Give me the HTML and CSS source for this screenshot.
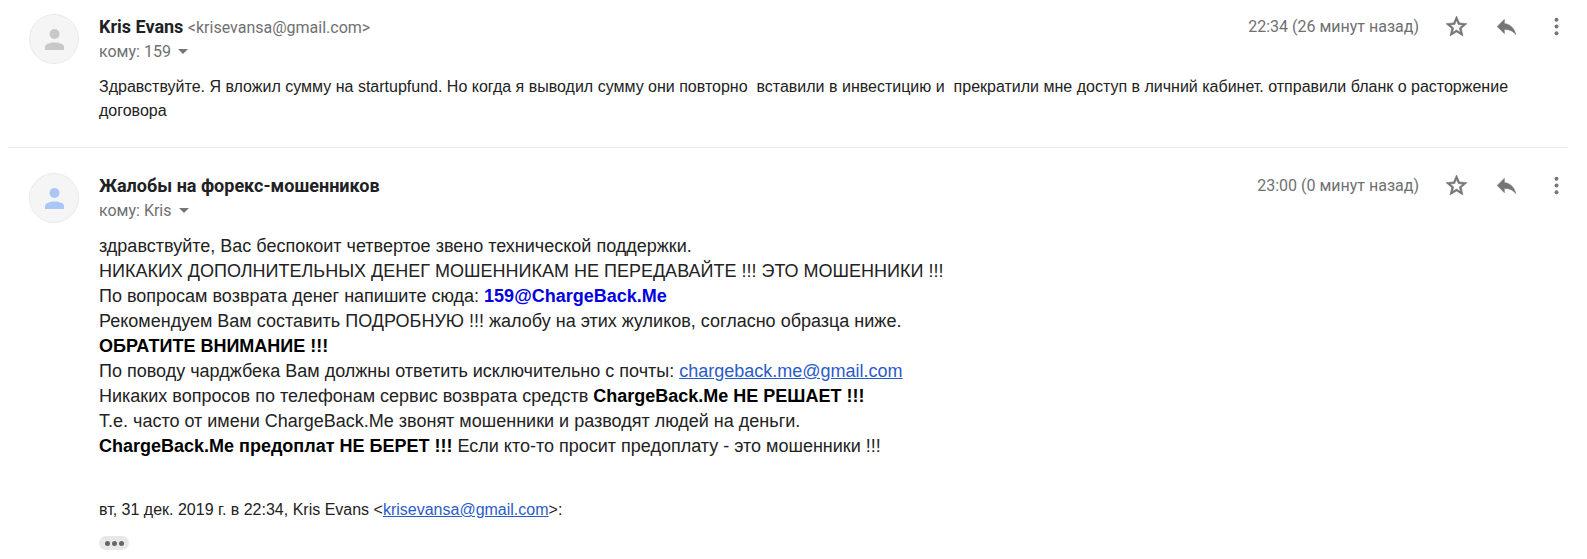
FILE: index.html
```
<!DOCTYPE html>
<html lang="ru">
<head>
    <meta charset="UTF-8">
    <title>Жалобы на форекс-мошенников</title>
    <link rel="stylesheet" href="styles.css">
</head>
<body>
<svg class="icon-defs" aria-hidden="true">
    <symbol id="person" viewBox="0 0 19 21">
        <circle cx="9.5" cy="5" r="5"/>
        <path d="M0 21v-3c0-3 5-4.500 9.500-4.500S19 15 19 18v3z"/>
    </symbol>
    <symbol id="star" viewBox="0 0 24 24">
        <path stroke-width="0.6" d="M22 9.24l-7.19-.62L12 2 9.19 8.63 2 9.24l5.46 4.73L5.82 21 12 17.27 18.18 21l-1.63-7.03L22 9.24zM12 15.4l-3.76 2.27 1-4.28-3.32-2.88 4.38-.38L12 6.1l1.71 4.04 4.38.38-3.32 2.88 1 4.28L12 15.4z"/>
    </symbol>
    <symbol id="reply" viewBox="0 0 24 24">
        <path stroke-width="0.4" d="M10 9V5l-7 7 7 7v-4.100c5 0 8.500 1.600 11 5.100-1-5-4-10-11-11z"/>
    </symbol>
    <symbol id="more" viewBox="0 0 24 24">
        <circle cx="12" cy="5.500" r="1.900"/>
        <circle cx="12" cy="12" r="1.900"/>
        <circle cx="12" cy="18.500" r="1.900"/>
    </symbol>
</svg>
<div class="message">
    <div class="avatar"><svg><use href="#person"/></svg></div>
    <div class="content">
        <div class="header">
            <div class="sender">
                <span class="name">Kris Evans</span>
                <span class="email">&lt;krisevansa@gmail.com&gt;</span>
            </div>
            <div class="time">22:34 (26 минут назад)</div>
            <div class="actions">
                <button aria-label="Пометить"><svg><use href="#star"/></svg></button>
                <button aria-label="Ответить"><svg><use href="#reply"/></svg></button>
                <button aria-label="Ещё"><svg><use href="#more"/></svg></button>
            </div>
        </div>
        <button class="recipient">кому: 159 <span class="arrow"></span></button>
        <div class="body small">Здравствуйте. Я вложил сумму на startupfund. Но когда я выводил сумму они повторно&nbsp; вставили в инвестицию и&nbsp; прекратили мне доступ в личний кабинет. отправили бланк о расторжение договора</div>
    </div>
</div>
<hr>
<div class="message">
    <div class="avatar own"><svg><use href="#person"/></svg></div>
    <div class="content">
        <div class="header">
            <div class="sender">
                <span class="name">Жалобы на форекс-мошенников</span>
            </div>
            <div class="time">23:00 (0 минут назад)</div>
            <div class="actions">
                <button aria-label="Пометить"><svg><use href="#star"/></svg></button>
                <button aria-label="Ответить"><svg><use href="#reply"/></svg></button>
                <button aria-label="Ещё"><svg><use href="#more"/></svg></button>
            </div>
        </div>
        <button class="recipient">кому: Kris <span class="arrow"></span></button>
        <div class="body">
            здравствуйте, Вас беспокоит четвертое звено технической поддержки.<br>
            НИКАКИХ ДОПОЛНИТЕЛЬНЫХ ДЕНЕГ МОШЕННИКАМ НЕ ПЕРЕДАВАЙТЕ !!! ЭТО МОШЕННИКИ !!!<br>
            По вопросам возврата денег напишите сюда: <b class="address">159@ChargeBack.Me</b><br>
            Рекомендуем Вам составить ПОДРОБНУЮ !!! жалобу на этих жуликов, согласно образца ниже.<br>
            <b>ОБРАТИТЕ ВНИМАНИЕ !!!</b><br>
            По поводу чарджбека Вам должны ответить исключительно с почты: <a href="mailto:chargeback.me@gmail.com">chargeback.me@gmail.com</a><br>
            Никаких вопросов по телефонам сервис возврата средств <b>ChargeBack.Me НЕ РЕШАЕТ !!!</b><br>
            Т.е. часто от имени ChargeBack.Me звонят мошенники и разводят людей на деньги.<br>
            <b>ChargeBack.Me предоплат НЕ БЕРЕТ !!!</b> Если кто-то просит предоплату - это мошенники !!!
        </div>
        <div class="quote small">вт, 31 дек. 2019 г. в 22:34, Kris Evans &lt;<a href="mailto:krisevansa@gmail.com">krisevansa@gmail.com</a>&gt;:</div>
        <button class="trimmed" aria-label="Показать скрытый текст"><i></i><i></i><i></i></button>
    </div>
</div>
</body>
</html>
```

FILE: styles.css
```
* {
    box-sizing: border-box;
}

body {
    margin: 0;
    background: #ffffff;
    color: #222222;
    font-family: 'Liberation Sans', Arial, sans-serif;
    font-size: 18px;
    line-height: 25px;
}

button {
    border: none;
    background: none;
    padding: 0;
    cursor: pointer;
}

.icon-defs {
    display: none;
}

.message {
    display: flex;
    gap: 20px;
    padding: 14px 6px 0 29px;
}

.avatar {
    display: flex;
    flex: none;
    align-items: center;
    justify-content: center;
    width: 50px;
    height: 50px;
    border: 1px solid #eaeaea;
    border-radius: 50%;
    background: #f5f5f5;
    fill: #c8c8c8;
}

.avatar.own {
    fill: #a8c7f5;
}

.avatar svg {
    width: 19px;
    height: 21px;
}

.content {
    flex: 1;
}

.header {
    display: flex;
    align-items: center;
    height: 25px;
    font-family: Roboto, sans-serif;
}

.sender {
    flex: 1;
}

.name {
    color: #202124;
    font-size: 18px;
    font-weight: bold;
}

.email, .time, .recipient {
    color: #6f7072;
    font-family: Roboto, sans-serif;
    font-size: 16px;
}

.actions {
    display: flex;
    margin-left: 12px;
}

.actions button {
    display: flex;
    align-items: center;
    justify-content: center;
    width: 50px;
    height: 25px;
}

.actions svg {
    width: 25px;
    height: 25px;
    fill: #757575;
    stroke: #757575;
    stroke-width: 0;
}

.recipient {
    display: flex;
    align-items: center;
    height: 25px;
}

.arrow {
    margin-left: 7px;
    border-top: 5px solid #757575;
    border-left: 5px solid transparent;
    border-right: 5px solid transparent;
}

.body {
    margin: 11px 46px 0 0;
}

.small {
    font-size: 16px;
    line-height: 24px;
}

a {
    color: #2a5cc8;
}

b {
    color: #000000;
}

.address {
    color: #0000e0;
}

hr {
    margin: 24px 19px 11px 8px;
    border: none;
    border-top: 1px solid #ececec;
}

.quote {
    margin-top: 39px;
}

.trimmed {
    display: flex;
    align-items: center;
    justify-content: center;
    gap: 2px;
    width: 30px;
    height: 14px;
    margin-top: 14px;
    border-radius: 7px;
    background: #e8e8e8;
}

.trimmed i {
    width: 5px;
    height: 5px;
    border-radius: 50%;
    background: #666666;
}
```
